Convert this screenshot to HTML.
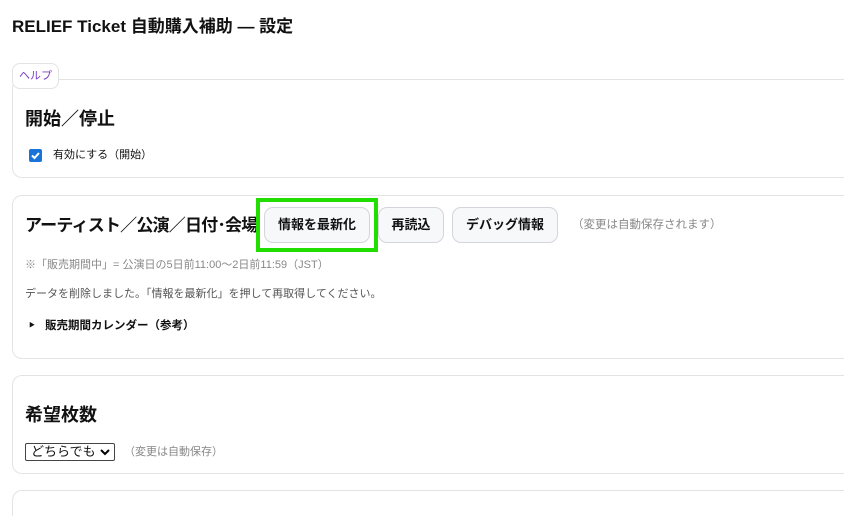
<!DOCTYPE html>
<html><head><meta charset="utf-8"><style>
*{box-sizing:border-box;margin:0;padding:0}
html,body{width:844px;height:516px;overflow:hidden}
body{background:#fff;font-family:"Liberation Sans","Noto Sans CJK JP",sans-serif;color:#111;position:relative}
.a{position:absolute;white-space:nowrap}
.card{position:absolute;left:12px;width:832px;border:1px solid #e3e3e3;border-right:none;border-radius:10px 0 0 10px;background:#fff}
h1{position:absolute;left:12px;top:16px;font-size:17px;font-weight:bold;line-height:22px}
.h2{font-size:18px;font-weight:bold;line-height:24px}
.btn{position:absolute;height:36px;border:1px solid #d4d4dc;border-radius:9px;background:#f7f8fa;font-size:13px;font-weight:bold;line-height:34px;text-align:center}
.gray{color:#888;font-size:11px}
</style></head><body>
<h1>RELIEF Ticket 自動購入補助 — 設定</h1>
<div class="card" style="top:79px;height:99px"></div>
<div class="a" style="left:12px;top:63px;width:47px;height:26px;border:1px solid #e3e3e3;border-radius:8px;background:#fff;color:#7a3fc8;font-size:11px;line-height:24px;text-align:center">ヘルプ</div>
<div class="a h2" style="left:25px;top:107px">開始／停止</div>
<div class="a" style="left:29px;top:149px;width:13px;height:13px;background:#1a73d9;border-radius:2px"><svg width="13" height="13" viewBox="0 0 13 13"><path d="M3 6.5l2.5 2.5 4.5-5" stroke="#fff" stroke-width="2" fill="none"/></svg></div>
<div class="a" style="left:53px;top:147px;font-size:11px;line-height:17px">有効にする（開始）</div>

<div class="card" style="top:195px;height:164px"></div>
<div class="a h2" style="left:25px;top:214px;font-size:17px;letter-spacing:-0.8px">アーティスト／公演／日付･会場</div>
<div class="a" style="left:256px;top:198px;width:122px;height:54px;border:4px solid #22dd00"></div>
<div class="btn" style="left:264px;top:207px;width:106px">情報を最新化</div>
<div class="btn" style="left:378px;top:207px;width:66px">再読込</div>
<div class="btn" style="left:452px;top:207px;width:106px">デバッグ情報</div>
<div class="a gray" style="left:572px;top:217px;font-size:11.5px;line-height:17px">（変更は自動保存されます）</div>
<div class="a gray" style="left:25px;top:257px;line-height:16px">※「販売期間中」= 公演日の5日前11:00〜2日前11:59（JST）</div>
<div class="a" style="left:25px;top:286px;font-size:11px;line-height:16px;color:#555">データを削除しました。「情報を最新化」を押して再取得してください。</div>
<div class="a" style="left:29px;top:319px;font-size:6px;line-height:14px">▶</div>
<div class="a" style="left:45px;top:318px;font-size:11.5px;font-weight:bold;line-height:16px">販売期間カレンダー（参考）</div>

<div class="card" style="top:375px;height:99px"></div>
<div class="a h2" style="left:25px;top:403px">希望枚数</div>
<div class="a" style="left:25px;top:443px;width:90px;height:18px;border:1px solid #444;border-radius:2px;font-size:13px;line-height:16px;padding-left:5px">どちらでも<svg style="position:absolute;right:4px;top:5px" width="10" height="7" viewBox="0 0 10 7"><path d="M1 1l4 4 4-4" stroke="#000" stroke-width="2" fill="none"/></svg></div>
<div class="a gray" style="left:124px;top:444px;line-height:16px">（変更は自動保存）</div>

<div class="card" style="top:490px;height:26px;border-bottom:none;border-radius:10px 0 0 0"></div>
</body></html>
